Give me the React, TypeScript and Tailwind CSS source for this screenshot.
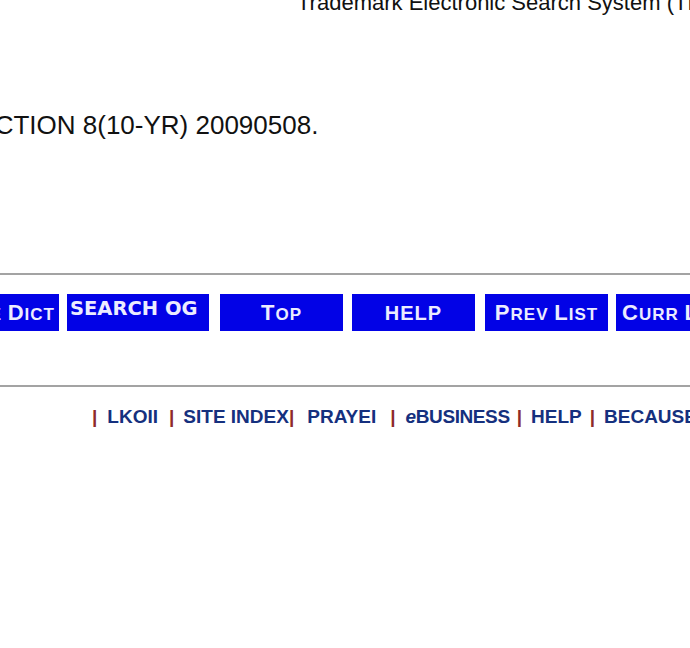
import React from "react";

const capBtn =
  "flex items-center justify-center h-[37px] w-[123px] shrink-0 bg-[#0202e6] text-[#ececff] font-bold tracking-[1px] whitespace-nowrap [font-family:'Liberation_Sans',Arial,sans-serif]";

function SC({ text }: { text: string }) {
  const words = text.split(" ");
  return (
    <span className="leading-none">
      {words.map((w, i) => (
        <React.Fragment key={i}>
          {i > 0 && <span className="text-[17px]"> </span>}
          <span className="text-[22px]">{w[0]}</span>
          <span className="text-[17px] uppercase">{w.slice(1)}</span>
        </React.Fragment>
      ))}
    </span>
  );
}

function Sep() {
  return <span className="text-[#8e2a2a] font-bold">|</span>;
}

function Link({ children }: { children: React.ReactNode }) {
  return <span className="text-[#15307e] font-bold">{children}</span>;
}

export default function App() {
  return (
    <div className="w-[690px] h-[648px] overflow-hidden bg-white [font-family:'Liberation_Sans',Arial,sans-serif]">
      <div className="mt-[-8px] pl-[297px] text-[22px] leading-[22px] text-[#111] whitespace-nowrap">
        Trademark Electronic Search System (TESS)
      </div>

      <div className="mt-[98px] ml-[-40px] text-[26px] leading-[26px] text-[#111] whitespace-nowrap">
        SECTION 8(10-YR) 20090508.
      </div>

      <div className="mt-[135px] w-[800px] border-t-2 border-[#a3a3a3]" />

      <div className="mt-[19px] flex whitespace-nowrap">
        <div className={capBtn + " ml-[-64px] justify-end pr-[4px] tracking-[1.5px]"}>
          <SC text="Browse Dict" />
        </div>
        <div className="ml-[8px] h-[37px] w-[142px] shrink-0 bg-[#0202e6] text-[#ececff] font-bold text-[19.5px] leading-[22px] pl-[3px] pt-[4px] [font-family:'DejaVu_Sans',Verdana,sans-serif]">
          SEARCH OG
        </div>
        <div className={capBtn + " ml-[11px] w-[122px]"}>
          <SC text="Top" />
        </div>
        <div className={capBtn + " ml-[9px] text-[20px]"}>HELP</div>
        <div className={capBtn + " ml-[10px]"}>
          <SC text="Prev List" />
        </div>
        <div className={capBtn + " ml-[8px] justify-start pl-[6px]"}>
          <SC text="Curr List" />
        </div>
      </div>

      <div className="mt-[54px] w-[800px] border-t-2 border-[#a3a3a3]" />

      <div className="mt-[20px] pl-[92px] flex whitespace-nowrap text-[19px] leading-[20px]">
        <Sep />
        <span className="ml-[10px]"><Link>LKOII</Link></span>
        <span className="ml-[11px]"><Sep /></span>
        <span className="ml-[9px]"><Link>SITE INDEX</Link></span>
        <span className="ml-[0px]"><Sep /></span>
        <span className="ml-[13px]"><Link>PRAYEI</Link></span>
        <span className="ml-[14px]"><Sep /></span>
        <span className="ml-[10px] tracking-[-0.4px]"><Link><i>e</i>BUSINESS</Link></span>
        <span className="ml-[7px]"><Sep /></span>
        <span className="ml-[9px]"><Link>HELP</Link></span>
        <span className="ml-[8px]"><Sep /></span>
        <span className="ml-[9px]"><Link>BECAUSE</Link></span>
      </div>
    </div>
  );
}
